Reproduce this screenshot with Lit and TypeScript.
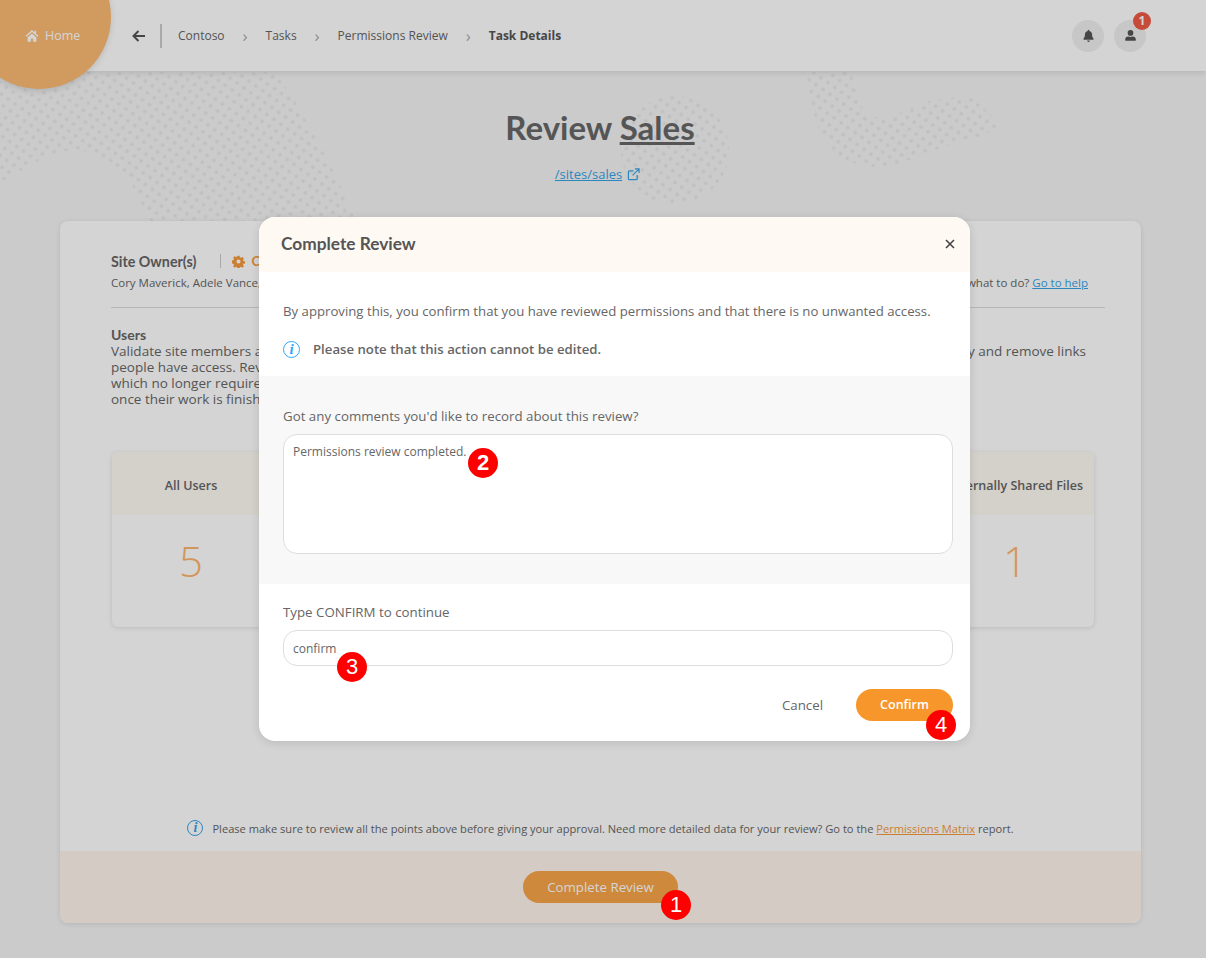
import {LitElement, html, css, svg} from 'lit'
import {customElement} from 'lit/decorators.js'

const homeIcon = svg`<path d="M8 1.2 0.6 7.6l1 1.2L8 3.3l6.4 5.5 1-1.2-2.7-2.3V2h-2v1.7L8 1.2zM2.9 9.6V14.6h3.8v-3.6h2.6v3.6h3.8V9.6L8 5.2 2.9 9.6z"/>`
const bellIcon = svg`<path d="M8 1a1 1 0 0 0-1 1v.6C4.9 3 3.6 4.8 3.6 6.9c0 3-.8 3.9-1.6 4.8-.2.2-.3.4-.3.7 0 .4.3.8.8.8h11c.5 0 .8-.4.8-.8 0-.3-.1-.5-.3-.7-.8-.9-1.6-1.8-1.6-4.8 0-2.1-1.3-3.9-3.4-4.3V2a1 1 0 0 0-1-1zM6.3 14.2a1.7 1.7 0 0 0 3.4 0H6.3z"/>`
const userIcon = svg`<circle cx="8" cy="4.8" r="3.5"/><path d="M2.4 14.6c-.5 0-.9-.4-.9-.9v-1c0-2 1.6-3.5 3.5-3.5h.6c.7.3 1.5.5 2.4.5s1.7-.2 2.4-.5h.6c1.9 0 3.5 1.5 3.5 3.5v1c0 .5-.4.9-.9.9H2.400z"/>`

@customElement('app-root')
export class AppRoot extends LitElement {
    static styles = css`
        :host {
            display: block;
            position: relative;
            height: 958px;
            overflow: hidden;
            background: #f4f4f4;
            color: #666;
            font-family: "Open Sans", sans-serif;
            font-size: 13px;
        }

        /* background dots */
        .dots {
            position: absolute;
            left: 0;
            top: 0;
        }

        .page {
            position: relative;
            display: flex;
            flex-direction: column;
            height: 100%;
        }

        header {
            flex: none;
            position: relative;
            display: flex;
            align-items: center;
            height: 71px;
            background: #fff;
            box-shadow: 0 2px 6px rgba(0, 0, 0, 0.1);
        }

        .home-circle {
            position: absolute;
            left: -33px;
            top: -55px;
            width: 144px;
            height: 144px;
            border-radius: 50%;
            background: #fcba72;
            box-shadow: 0 2px 6px rgba(0, 0, 0, 0.12);
        }

        .home {
            position: relative;
            display: flex;
            align-items: center;
            gap: 6px;
            width: 132px;
            padding-left: 25px;
            box-sizing: border-box;
            color: #fff;
            font-size: 12.5px;
        }

        .home svg {
            width: 14px;
            height: 14px;
            fill: #fff;
        }

        .back {
            width: 14px;
            height: 12px;
            margin-right: 14px;
            stroke: #555;
            fill: none;
            stroke-width: 2;
        }

        .vr {
            width: 2px;
            height: 24px;
            background: #ccc;
            margin-right: 16px;
        }

        .crumbs {
            display: flex;
            align-items: center;
            font-size: 12px;
            color: #666;
        }

        .crumbs .sep {
            width: 41px;
            text-align: center;
            color: #aaa;
            font-size: 17px;
            line-height: 16px;
        }

        .crumbs b {
            color: #555;
        }

        .actions {
            margin-left: auto;
            margin-right: 60px;
            display: flex;
            gap: 10px;
        }

        .round {
            position: relative;
            display: flex;
            align-items: center;
            justify-content: center;
            width: 32px;
            height: 32px;
            border-radius: 50%;
            background: #f0f0f0;
        }

        .round svg {
            width: 13px;
            height: 13px;
            fill: #555;
        }

        .count {
            position: absolute;
            right: -5px;
            top: -8px;
            width: 18px;
            height: 18px;
            border-radius: 50%;
            background: #ef5b45;
            color: #fff;
            font-size: 12px;
            font-weight: 700;
            line-height: 18px;
            text-align: center;
        }

        .title {
            flex: none;
            height: 150px;
            display: flex;
            flex-direction: column;
            align-items: center;
            box-sizing: border-box;
            padding: 34px 6px 0 0;
        }

        h1 {
            margin: 0;
            font-family: Lato, sans-serif;
            font-size: 33px;
            line-height: 44px;
            font-weight: 700;
            color: #676767;
        }

        .site-link {
            display: flex;
            align-items: center;
            gap: 5px;
            margin: 16px 5px 0 0;
            color: #36a3e6;
            font-size: 13px;
        }

        a {
            text-decoration: underline;
        }

        .site-link svg {
            width: 13px;
            height: 13px;
            fill: none;
            stroke: #36a3e6;
            stroke-width: 1.3;
        }

        .card {
            flex: none;
            display: flex;
            flex-direction: column;
            height: 702px;
            width: 1081px;
            margin-left: 60px;
            border-radius: 8px;
            background: #fff;
            box-shadow: 0 1px 5px rgba(0, 0, 0, 0.1);
            overflow: hidden;
        }

        .card-body {
            flex: 1;
            display: flex;
            flex-direction: column;
            padding: 31px 36px 0 51px;
        }

        .owners-row {
            display: flex;
            justify-content: space-between;
            align-items: flex-end;
            padding-bottom: 16px;
            border-bottom: 1px solid #ddd;
        }

        .owner-head {
            display: flex;
            align-items: center;
            height: 18px;
            font-family: Lato, sans-serif;
            font-weight: 700;
            font-size: 14.3px;
        }

        .owner-head i {
            width: 1px;
            height: 14px;
            margin: 0 11px 0 24px;
            background: #ccc;
        }

        .owner-head span {
            display: flex;
            align-items: center;
            gap: 6px;
            color: #f59a3c;
            font-size: 13px;
        }

        .owner-head svg {
            width: 13px;
            height: 13px;
            fill: #f59a3c;
        }

        .owner-names {
            margin-top: 5px;
            font-size: 11.5px;
            line-height: 16px;
        }

        .help {
            font-size: 11.5px;
            line-height: 16px;
            padding-right: 17px;
        }

        .help a {
            color: #36a3e6;
        }

        .intro {
            display: flex;
            justify-content: space-between;
            margin-top: 19px;
            font-size: 13.5px;
            line-height: 16px;
        }

        .intro h3 {
            margin: 0;
            font-family: Lato, sans-serif;
            font-size: 14px;
            line-height: 16px;
            font-weight: 700;
        }

        .intro .right {
            padding: 16px 19px 0 0;
        }

        .tiles {
            display: flex;
            justify-content: space-between;
            margin: 45px 11px 0 1px;
        }

        .tile {
            width: 158px;
            height: 175px;
            border-radius: 6px;
            background: #fff;
            box-shadow: 0 1px 5px rgba(0, 0, 0, 0.12);
            overflow: hidden;
            text-align: center;
        }

        .tile-head {
            height: 63px;
            line-height: 67px;
            background: #fffaf3;
            font-weight: 600;
            font-size: 12.5px;
            white-space: nowrap;
        }

        .tile-value {
            margin-top: 21px;
            font-size: 42px;
            font-weight: 300;
            line-height: 50px;
            color: #fdb56f;
        }

        .note {
            display: flex;
            align-items: center;
            justify-content: center;
            gap: 9px;
            margin: auto 0 15px -15px;
            font-size: 11.1px;
        }

        .note a {
            color: #f59a3c;
        }

        .info {
            flex: none;
            display: inline-block;
            box-sizing: border-box;
            width: 16px;
            height: 16px;
            border: 1.4px solid #36a3e6;
            border-radius: 50%;
            color: #36a3e6;
            font-family: "Liberation Serif", serif;
            font-style: italic;
            font-weight: 700;
            font-size: 14px;
            line-height: 14px;
            text-align: center;
        }

        .card-foot {
            flex: none;
            display: flex;
            justify-content: center;
            align-items: flex-start;
            height: 72px;
            padding-top: 20px;
            box-sizing: border-box;
            background: #fef5ec;
        }

        .btn {
            box-sizing: border-box;
            height: 32px;
            line-height: 32px;
            border-radius: 16px;
            color: #fff;
            text-align: center;
            font-size: 12.5px;
            font-weight: 600;
        }

        .btn.main {
            width: 155px;
            background: #f8a549;
            font-weight: 400;
            font-size: 13.3px;
        }

        .btn.confirm {
            position: relative;
            width: 97px;
            background: #f7962b;
        }

        .mark {
            position: absolute;
            width: 30px;
            height: 30px;
            border-radius: 50%;
            background: #fe0000;
            color: #fff;
            font-family: "Liberation Sans", sans-serif;
            font-size: 22px;
            font-weight: 400;
            line-height: 30px;
            text-align: center;
        }

        .mark.one {
            left: 661px;
            top: 890px;
        }

        .mark.two {
            left: 184px;
            top: 13px;
            font-weight: 700;
        }

        .mark.three {
            left: 53px;
            top: 21px;
        }

        .mark.four {
            right: -3px;
            top: 21px;
        }

        .overlay {
            position: absolute;
            inset: 0;
            background: rgba(0, 0, 0, 0.17);
        }

        .modal {
            position: absolute;
            left: 259px;
            top: 217px;
            width: 711px;
            height: 524px;
            border-radius: 16px;
            background: #fff;
            box-shadow: 0 2px 10px rgba(0, 0, 0, 0.12);
            overflow: hidden;
            display: flex;
            flex-direction: column;
            font-size: 13.3px;
        }

        .modal-head {
            flex: none;
            display: flex;
            align-items: center;
            justify-content: space-between;
            height: 53px;
            padding: 0 15px 2px 22px;
            background: #fff9f3;
        }

        .modal-head h2 {
            margin: 0;
            font-family: Lato, sans-serif;
            font-size: 17.3px;
            font-weight: 700;
            color: #555;
        }

        .modal-head svg {
            width: 10px;
            height: 10px;
            stroke: #444;
            stroke-width: 1.6;
        }

        .modal-top {
            flex: none;
            height: 104px;
            padding: 30px 24px 0;
            box-sizing: border-box;
            font-size: 13.2px;
            line-height: 18px;
        }

        .modal-top p {
            margin: 0;
        }

        .modal-note {
            display: flex;
            align-items: center;
            gap: 13px;
            margin-top: 20px;
            font-weight: 600;
        }

        .modal-note .info {
            width: 17px;
            height: 17px;
            border-color: #2ea6fa;
            color: #2ea6fa;
            font-size: 15px;
            line-height: 15px;
        }

        .modal-mid {
            flex: none;
            height: 208px;
            padding: 31px 17px 0 24px;
            box-sizing: border-box;
            background: #f8f8f8;
        }

        label {
            display: block;
            line-height: 18px;
        }

        .field {
            position: relative;
            box-sizing: border-box;
            margin-top: 9px;
            padding: 8px 9px;
            border: 1px solid #ddd;
            border-radius: 14px;
            background: #fff;
            font-size: 12px;
            line-height: 18px;
        }

        .field.area {
            height: 120px;
        }

        .field.line {
            height: 36px;
            padding-top: 9px;
        }

        .modal-low {
            flex: 1;
            padding: 19px 17px 0 24px;
        }

        .modal-actions {
            display: flex;
            align-items: center;
            justify-content: flex-end;
            gap: 33px;
            margin-top: 23px;
        }
    `

    protected render(): unknown {
        return html`
            <svg class="dots" width="1206" height="300" viewBox="0 0 1206 300">
                <defs>
                    <pattern id="dotgrid" width="12" height="12" patternUnits="userSpaceOnUse" patternTransform="rotate(-10)">
                        <circle cx="3" cy="3" r="1.8" fill="#000" fill-opacity=".055"/>
                        <circle cx="9" cy="9" r="1.8" fill="#000" fill-opacity=".055"/>
                    </pattern>
                </defs>
                <path fill="url(#dotgrid)" d="M0 72H275C285 85 292 95 298 107L325 153 356 221H150L130 180C110 165 95 152 77 150 55 150 40 160 27 167L0 182Z"/>
                <circle fill="url(#dotgrid)" cx="675" cy="150" r="54"/>
                <path fill="url(#dotgrid)" d="M803 72H851L863 110C868 116 876 118 884 118 905 114 920 100 940 100 955 96 965 96 971 98 985 108 995 118 1000 127 985 135 970 140 955 143L909 160C898 165 888 167 878 167 862 166 850 163 840 157 828 145 820 132 816 120Z"/>
            </svg>

            <div class="page">
                <header>
                    <div class="home-circle"></div>
                    <div class="home">
                        <svg viewBox="0 0 16 16">${homeIcon}</svg>
                        <span>Home</span>
                    </div>
                    <svg class="back" viewBox="0 0 14 12"><path d="M13 6H2M6.500 1 1.500 6l5 5"/></svg>
                    <div class="vr"></div>
                    <nav class="crumbs">
                        <span>Contoso</span><span class="sep">›</span>
                        <span>Tasks</span><span class="sep">›</span>
                        <span>Permissions Review</span><span class="sep">›</span>
                        <b>Task Details</b>
                    </nav>
                    <div class="actions">
                        <div class="round"><svg viewBox="0 0 16 16">${bellIcon}</svg></div>
                        <div class="round"><svg viewBox="0 0 16 16">${userIcon}</svg><span class="count">1</span></div>
                    </div>
                </header>

                <section class="title">
                    <h1>Review <a>Sales</a></h1>
                    <div class="site-link">
                        <a>/sites/sales</a>
                        <svg viewBox="0 0 14 14"><path d="M7 3H2.500a1 1 0 0 0-1 1v7.500a1 1 0 0 0 1 1H10a1 1 0 0 0 1-1V7.500M6 8l7-7M8.500 1H13v4.500"/></svg>
                    </div>
                </section>

                <main class="card">
                    <div class="card-body">
                        <div class="owners-row">
                            <div>
                                <div class="owner-head">
                                    Site Owner(s)<i></i>
                                    <span>
                                        <svg viewBox="0 0 16 16"><path fill-rule="evenodd" d="M6.700 0.800h2.600l.4 2 1.300.6 1.800-1 1.800 1.800-1 1.800.5 1.300 2 .4v2.600l-2 .4-.5 1.300 1 1.800-1.800 1.800-1.800-1-1.300.5-.4 2H6.700l-.4-2-1.300-.5-1.800 1-1.800-1.800 1-1.800-.5-1.300-2-.4V6.700l2-.4.5-1.300-1-1.800 1.800-1.800 1.800 1 1.300-.6zM8 5.500a2.500 2.500 0 1 0 0 5 2.500 2.500 0 0 0 0-5z"/></svg>
                                        Change owners
                                    </span>
                                </div>
                                <div class="owner-names">Cory Maverick, Adele Vance, Megan Bowen</div>
                            </div>
                            <div class="help">Don't know what to do? <a>Go to help</a></div>
                        </div>

                        <div class="intro">
                            <div>
                                <h3>Users</h3>
                                Validate site members and guests to make sure the right<br>
                                people have access. Review any guest accounts<br>
                                which no longer require access and remove them<br>
                                once their work is finished.
                            </div>
                            <div class="right">
                                Check shared links regularly and remove links<br>
                                that are no longer needed.
                            </div>
                        </div>

                        <div class="tiles">
                            <div class="tile"><div class="tile-head">All Users</div><div class="tile-value">5</div></div>
                            <div class="tile"><div class="tile-head">Guests</div><div class="tile-value">0</div></div>
                            <div class="tile"><div class="tile-head">Shared Links</div><div class="tile-value">1</div></div>
                            <div class="tile"><div class="tile-head">Groups</div><div class="tile-value">3</div></div>
                            <div class="tile"><div class="tile-head">Externally Shared Files</div><div class="tile-value">1</div></div>
                        </div>

                        <div class="note">
                            <span class="info">i</span>
                            <span>Please make sure to review all the points above before giving your approval. Need more detailed data for your review? Go to the <a>Permissions Matrix</a> report.</span>
                        </div>
                    </div>

                    <div class="card-foot">
                        <div class="btn main">Complete Review</div>
                    </div>
                </main>
            </div>

            <div class="overlay"></div>

            <div class="modal">
                <div class="modal-head">
                    <h2>Complete Review</h2>
                    <svg viewBox="0 0 10 10"><path d="M1 1l8 8M9 1l-8 8"/></svg>
                </div>
                <div class="modal-top">
                    <p>By approving this, you confirm that you have reviewed permissions and that there is no unwanted access.</p>
                    <div class="modal-note"><span class="info">i</span><span>Please note that this action cannot be edited.</span></div>
                </div>
                <div class="modal-mid">
                    <label>Got any comments you'd like to record about this review?</label>
                    <div class="field area">Permissions review completed.<span class="mark two">2</span></div>
                </div>
                <div class="modal-low">
                    <label>Type CONFIRM to continue</label>
                    <div class="field line">confirm<span class="mark three">3</span></div>
                    <div class="modal-actions">
                        <span>Cancel</span>
                        <div class="btn confirm">Confirm<span class="mark four">4</span></div>
                    </div>
                </div>
            </div>

            <span class="mark one">1</span>
        `
    }
}

declare global {
    interface HTMLElementTagNameMap {
      "app-root": AppRoot;
    }
}
